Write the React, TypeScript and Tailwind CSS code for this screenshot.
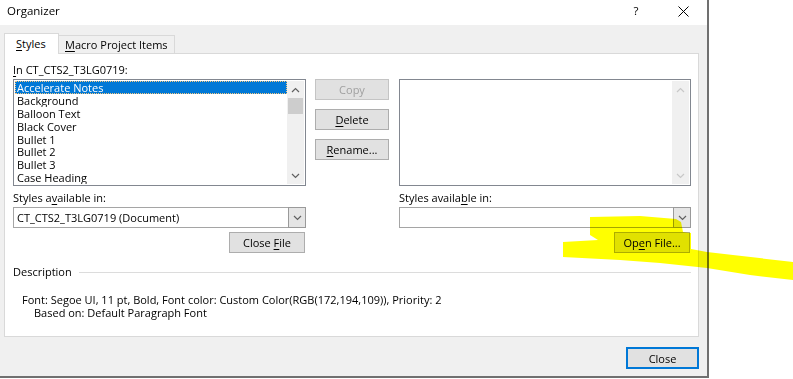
import React from 'react';

const font = "font-['Segoe_UI','Open_Sans',sans-serif]";

const styles = [
  'Accelerate Notes',
  'Background',
  'Balloon Text',
  'Black Cover',
  'Bullet 1',
  'Bullet 2',
  'Bullet 3',
  'Case Heading',
];

function Chevron({ up, color = '#606060' }: { up?: boolean; color?: string }) {
  return (
    <svg width="9" height="6" viewBox="0 0 9 6" className="block">
      <path d={up ? 'M1 5 L4.5 1.5 L8 5' : 'M1 1 L4.5 4.5 L8 1'} fill="none" stroke={color} strokeWidth="1.2" />
    </svg>
  );
}

function Btn({ children, className = '', disabled }: any) {
  return (
    <div
      className={
        'h-[21px] flex items-center justify-center border bg-[#e1e1e1] leading-none ' +
        (disabled ? 'border-[#c4c4c4] text-[#a0a0a0] ' : 'border-[#adadad] text-black ') +
        className
      }
    >
      {children}
    </div>
  );
}

function Combo({ value }: { value?: string }) {
  return (
    <div className="h-[21px] flex border border-[#a5a5a5] bg-white">
      <div className="flex-1 px-[3px] leading-[19px] truncate">{value}</div>
      <div className="w-[18px] -my-px -mr-px border border-[#9a9a9a] bg-[#e5e5e5] flex items-center justify-center">
        <Chevron />
      </div>
    </div>
  );
}

export default function App() {
  return (
    <div className={`relative w-[793px] h-[379px] bg-white overflow-hidden text-[11px] text-black ${font}`}>
      <div className="w-[709px] h-[378px] flex flex-col border-r-2 border-b-2 border-[#707070]">
        {/* title bar */}
        <div className="h-[25px] bg-white flex items-center pl-[7px] pb-[3px] text-[11.5px]">
          <span className="flex-1">Organizer</span>
          <span className="w-[12px] text-center">?</span>
          <div className="ml-[36px] mr-[18px] w-[11px] h-[11px]">
            <svg width="11" height="11" viewBox="0 0 11 11" className="block">
              <path d="M0.5 0.5 L10.5 10.5 M10.5 0.5 L0.5 10.5" stroke="#000" strokeWidth="1" />
            </svg>
          </div>
        </div>

        {/* body */}
        <div className="flex-1 bg-[#f0f0f0] px-[4px] pt-[8px] flex flex-col">
          {/* tabs */}
          <div className="flex items-end h-[20px]">
            <div className="w-[55px] h-[21px] -mb-px z-10 bg-white border border-b-0 border-[#d9d9d9] pl-[11px] leading-[19px]">
              <span className="underline underline-offset-2">S</span>tyles
            </div>
            <div className="h-[18px] px-[6px] border border-l-0 border-b-0 border-[#d9d9d9] bg-[#f0f0f0] leading-[17px]">
              <span className="underline underline-offset-2">M</span>acro Project Items
            </div>
          </div>

          {/* tab panel */}
          <div className="w-[695px] h-[284px] bg-white border border-[#d9d9d9] pl-[8px] pr-[7px]">
            <div className="mt-[8px] h-[16px] leading-[16px]">
              <span className="underline underline-offset-2">I</span>n CT_CTS2_T3LG0719:
            </div>

            <div className="mt-[1px] flex">
              {/* left list */}
              <div className="w-[293px] h-[107px] border border-[#828790] flex p-px">
                <div className="flex-1 flex flex-col">
                  {styles.map((s, i) => (
                    <div
                      key={s}
                      className={
                        'h-[13px] leading-[13px] pl-[2px] overflow-hidden ' +
                        (i === 0 ? 'bg-[#0078d7] text-white outline outline-1 outline-dotted outline-[#f5c77e] -outline-offset-1' : '')
                      }
                    >
                      {s}
                    </div>
                  ))}
                </div>
                <div className="w-[17px] bg-[#f0f0f0] flex flex-col items-center">
                  <div className="h-[17px] flex items-center justify-center"><Chevron up /></div>
                  <div className="w-[15px] h-[16px] bg-[#cdcdcd]" />
                  <div className="flex-1" />
                  <div className="h-[17px] flex items-center justify-center"><Chevron /></div>
                </div>
              </div>

              {/* buttons */}
              <div className="ml-[9px] w-[74px] flex flex-col gap-[9px]">
                <Btn disabled>Copy</Btn>
                <Btn>
                  <span className="underline underline-offset-2">D</span>elete
                </Btn>
                <Btn>
                  <span className="underline underline-offset-2">R</span>ename...
                </Btn>
              </div>

              {/* right list */}
              <div className="ml-[10px] w-[292px] h-[107px] border border-[#828790] flex p-px">
                <div className="flex-1" />
                <div className="w-[17px] bg-[#f0f0f0] flex flex-col items-center justify-between">
                  <div className="h-[17px] flex items-center justify-center"><Chevron up color="#c8c8c8" /></div>
                  <div className="h-[17px] flex items-center justify-center"><Chevron color="#c8c8c8" /></div>
                </div>
              </div>
            </div>

            {/* available in */}
            <div className="mt-[4px] flex">
              <div className="w-[293px] flex flex-col">
                <div className="h-[16px] leading-[16px] mb-[1px]">
                  Styles a<span className="underline underline-offset-2">v</span>ailable in:
                </div>
                <Combo value="CT_CTS2_T3LG0719 (Document)" />
                <div className="mt-[4px] flex justify-end pr-px">
                  <Btn className="w-[76px]">
                    Close&nbsp;<span className="underline underline-offset-2">F</span>ile
                  </Btn>
                </div>
              </div>
              <div className="ml-[93px] w-[292px] flex flex-col">
                <div className="h-[16px] leading-[16px] mb-[1px]">
                  Styles availa<span className="underline underline-offset-2">b</span>le in:
                </div>
                <Combo />
                <div className="mt-[4px] flex justify-end pr-px">
                  <Btn className="w-[76px]">
                    Op<span className="underline underline-offset-2">e</span>n File...
                  </Btn>
                </div>
              </div>
            </div>

            {/* description group */}
            <div className="mt-[11px] flex items-center h-[16px]">
              <span className="leading-[16px]">Description</span>
              <div className="ml-[7px] flex-1 h-px bg-[#dcdcdc]" />
            </div>
            <div className="mt-[13px] pl-[9px] leading-[13px]">
              <div>Font: Segoe UI, 11 pt, Bold, Font color: Custom Color(RGB(172,194,109)), Priority: 2</div>
              <div className="pl-[12px]">Based on: Default Paragraph Font</div>
            </div>
          </div>

          {/* footer */}
          <div className="flex justify-end mt-[10px] pr-[4px]">
            <div className="w-[73px] h-[22px] border-2 border-[#0078d7] bg-[#e1e1e1] flex items-center justify-center leading-none">
              Close
            </div>
          </div>
        </div>
      </div>

      {/* highlighter stroke */}
      <svg className="absolute inset-0 pointer-events-none mix-blend-multiply" width="793" height="379">
        <path
          d="M590 217 L640 216 L676 219 L681 222 L683 232 L691 233 L691 249 L707 252 L733 255 L793 262 L793 280 L750 275 L707 268 L660 263 L620 260 L563 257 L563 242 L598 240 L590 235 Z"
          fill="#ffff00"
        />
      </svg>
    </div>
  );
}
